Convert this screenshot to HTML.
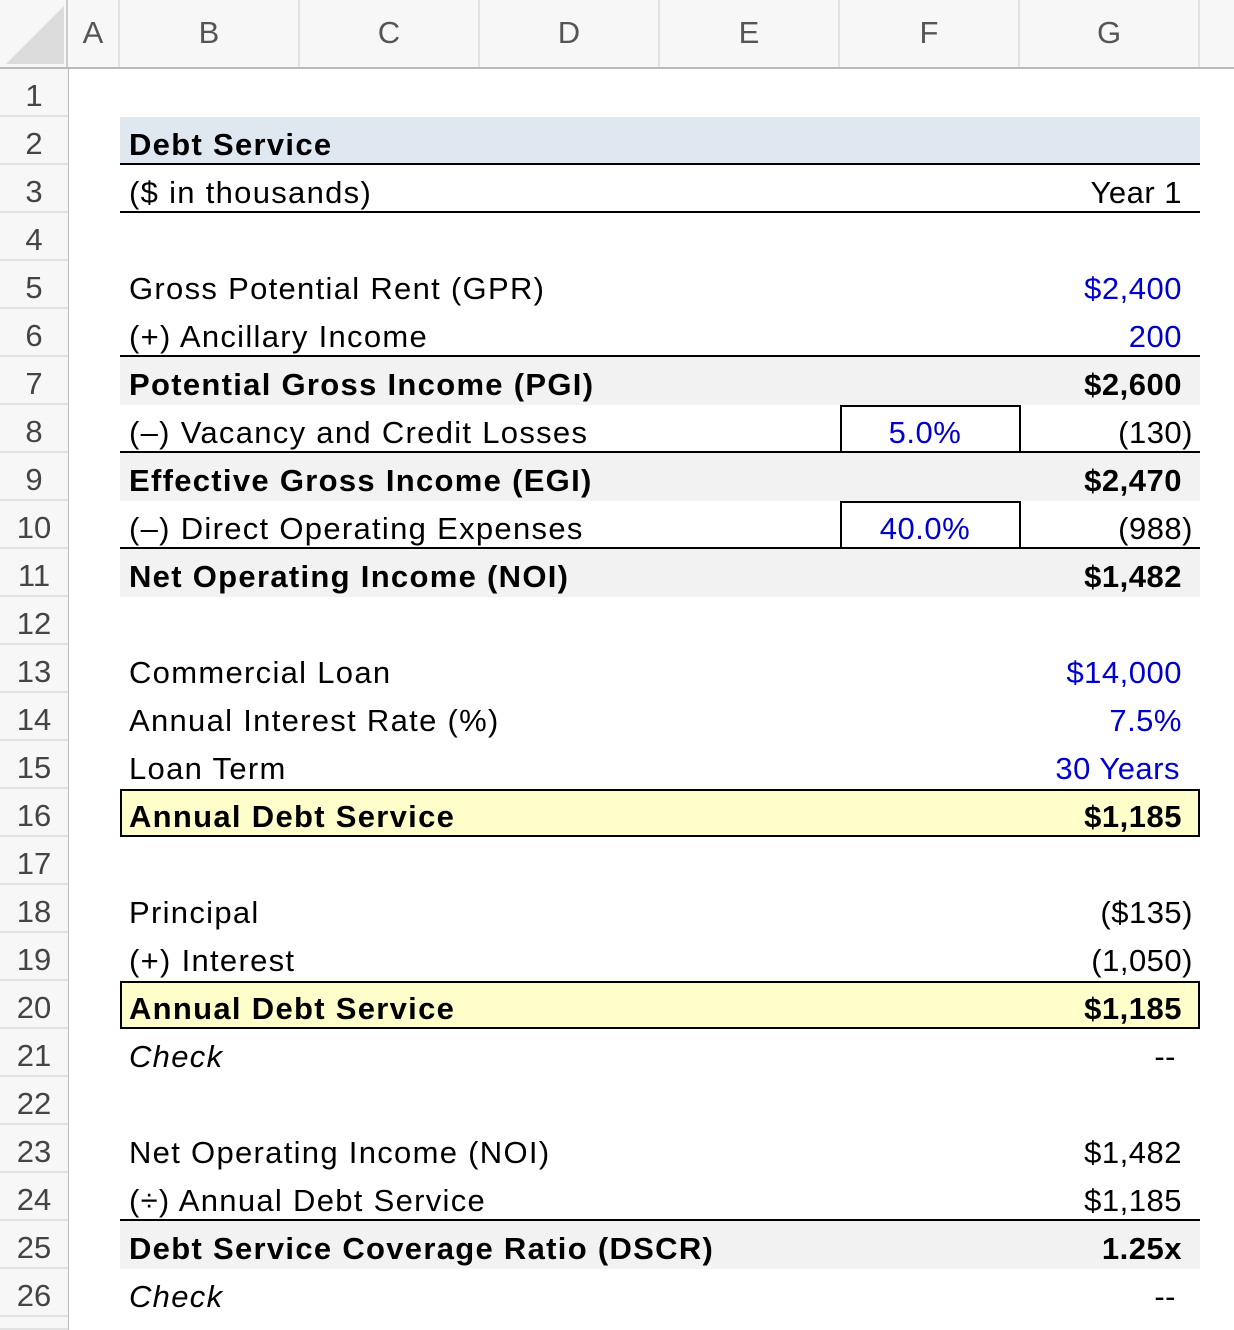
<!DOCTYPE html>
<html><head><meta charset="utf-8"><style>
body{margin:0;width:1234px;height:1330px;overflow:hidden;background:#fff;font-family:"Liberation Sans",sans-serif;position:relative}
.a{position:absolute}
.ch{position:absolute;top:0;height:68px;line-height:66px;text-align:center;font-size:31px;color:#555;background:#f7f7f7;border-right:2px solid #e2e2e2;box-sizing:border-box}
.rn{position:absolute;left:0;width:68px;height:48px;line-height:54px;text-align:center;font-size:31px;color:#444;background:#f7f7f7;border-bottom:2px solid #e2e2e2;box-sizing:border-box}
.t{position:absolute;left:129px;font-size:31px;line-height:56px;height:48px;color:#000;white-space:nowrap;letter-spacing:1.3px}
.v{position:absolute;right:52px;font-size:31px;line-height:56px;height:48px;color:#000;white-space:nowrap;text-align:right;letter-spacing:0.5px}
.p{right:41px}
.b{font-weight:bold}
.blue{color:#0000cc}
.i{font-style:italic}
.bg{position:absolute;left:120px;width:1080px;height:48px}
.hl{position:absolute;left:120px;width:1080px;height:2px;background:#000}
</style></head><body>
<div class="a" style="left:0;top:0;width:68px;height:68px;background:#f7f7f7;border-right:2px solid #ccc;box-sizing:border-box"></div>
<svg class="a" style="left:4px;top:4px" width="60" height="60"><polygon points="60,2 60,60 2,60" fill="#dcdcdc"/></svg>
<div class="ch" style="left:68px;width:52px">A</div>
<div class="ch" style="left:120px;width:180px">B</div>
<div class="ch" style="left:300px;width:180px">C</div>
<div class="ch" style="left:480px;width:180px">D</div>
<div class="ch" style="left:660px;width:180px">E</div>
<div class="ch" style="left:840px;width:180px">F</div>
<div class="ch" style="left:1020px;width:180px">G</div>
<div class="ch" style="left:1200px;width:34px;border-right:none"></div>
<div class="a" style="left:0;top:67px;width:1234px;height:2px;background:#bbb"></div>
<div class="a" style="left:67px;top:69px;width:2px;height:1261px;background:#bbb"></div>

<div class="rn" style="top:69px">1</div><div class="rn" style="top:117px">2</div><div class="rn" style="top:165px">3</div><div class="rn" style="top:213px">4</div><div class="rn" style="top:261px">5</div><div class="rn" style="top:309px">6</div><div class="rn" style="top:357px">7</div><div class="rn" style="top:405px">8</div><div class="rn" style="top:453px">9</div><div class="rn" style="top:501px">10</div><div class="rn" style="top:549px">11</div><div class="rn" style="top:597px">12</div><div class="rn" style="top:645px">13</div><div class="rn" style="top:693px">14</div><div class="rn" style="top:741px">15</div><div class="rn" style="top:789px">16</div><div class="rn" style="top:837px">17</div><div class="rn" style="top:885px">18</div><div class="rn" style="top:933px">19</div><div class="rn" style="top:981px">20</div><div class="rn" style="top:1029px">21</div><div class="rn" style="top:1077px">22</div><div class="rn" style="top:1125px">23</div><div class="rn" style="top:1173px">24</div><div class="rn" style="top:1221px">25</div><div class="rn" style="top:1269px">26</div><div class="rn" style="top:1317px;height:13px"></div>

<div class="bg" style="top:117px;background:#dfe7f1"></div>
<div class="bg" style="top:357px;background:#f2f2f2"></div>
<div class="bg" style="top:453px;background:#f2f2f2"></div>
<div class="bg" style="top:549px;background:#f2f2f2"></div>
<div class="bg" style="top:1221px;background:#f2f2f2"></div>
<div class="bg" style="top:789px;background:#ffffcc;border:2px solid #000;box-sizing:border-box"></div>
<div class="bg" style="top:981px;background:#ffffcc;border:2px solid #000;box-sizing:border-box"></div>
<div class="a" style="left:840px;top:405px;width:181px;height:48px;border:2px solid #000;box-sizing:border-box"></div>
<div class="a" style="left:840px;top:501px;width:181px;height:48px;border:2px solid #000;box-sizing:border-box"></div>
<div class="hl" style="top:163px"></div>
<div class="hl" style="top:211px"></div>
<div class="hl" style="top:355px"></div>
<div class="hl" style="top:451px"></div>
<div class="hl" style="top:547px"></div>
<div class="hl" style="top:1219px"></div>

<div class="t b" style="top:117px">Debt Service</div>
<div class="t" style="top:165px">($ in thousands)</div><div class="v" style="top:165px">Year 1</div>
<div class="t" style="top:261px">Gross Potential Rent (GPR)</div><div class="v blue" style="top:261px">$2,400</div>
<div class="t" style="top:309px">(+) Ancillary Income</div><div class="v blue" style="top:309px">200</div>
<div class="t b" style="top:357px">Potential Gross Income (PGI)</div><div class="v b" style="top:357px">$2,600</div>
<div class="t" style="top:405px">(–) Vacancy and Credit Losses</div><div class="a blue" style="left:840px;width:170px;text-align:center;top:405px;font-size:31px;line-height:56px;letter-spacing:0.5px">5.0%</div><div class="v p" style="top:405px">(130)</div>
<div class="t b" style="top:453px">Effective Gross Income (EGI)</div><div class="v b" style="top:453px">$2,470</div>
<div class="t" style="top:501px">(–) Direct Operating Expenses</div><div class="a blue" style="left:840px;width:170px;text-align:center;top:501px;font-size:31px;line-height:56px;letter-spacing:0.5px">40.0%</div><div class="v p" style="top:501px">(988)</div>
<div class="t b" style="top:549px">Net Operating Income (NOI)</div><div class="v b" style="top:549px">$1,482</div>
<div class="t" style="top:645px">Commercial Loan</div><div class="v blue" style="top:645px">$14,000</div>
<div class="t" style="top:693px">Annual Interest Rate (%)</div><div class="v blue" style="top:693px">7.5%</div>
<div class="t" style="top:741px">Loan Term</div><div class="v blue" style="top:741px;right:54px">30 Years</div>
<div class="t b" style="top:789px">Annual Debt Service</div><div class="v b" style="top:789px">$1,185</div>
<div class="t" style="top:885px">Principal</div><div class="v p" style="top:885px">($135)</div>
<div class="t" style="top:933px">(+) Interest</div><div class="v p" style="top:933px">(1,050)</div>
<div class="t b" style="top:981px">Annual Debt Service</div><div class="v b" style="top:981px">$1,185</div>
<div class="t i" style="top:1029px">Check</div><div class="v" style="top:1029px;right:58px">--</div>
<div class="t" style="top:1125px">Net Operating Income (NOI)</div><div class="v" style="top:1125px">$1,482</div>
<div class="t" style="top:1173px">(÷) Annual Debt Service</div><div class="v" style="top:1173px">$1,185</div>
<div class="t b" style="top:1221px">Debt Service Coverage Ratio (DSCR)</div><div class="v b" style="top:1221px">1.25x</div>
<div class="t i" style="top:1269px">Check</div><div class="v" style="top:1269px;right:58px">--</div>
</body></html>
